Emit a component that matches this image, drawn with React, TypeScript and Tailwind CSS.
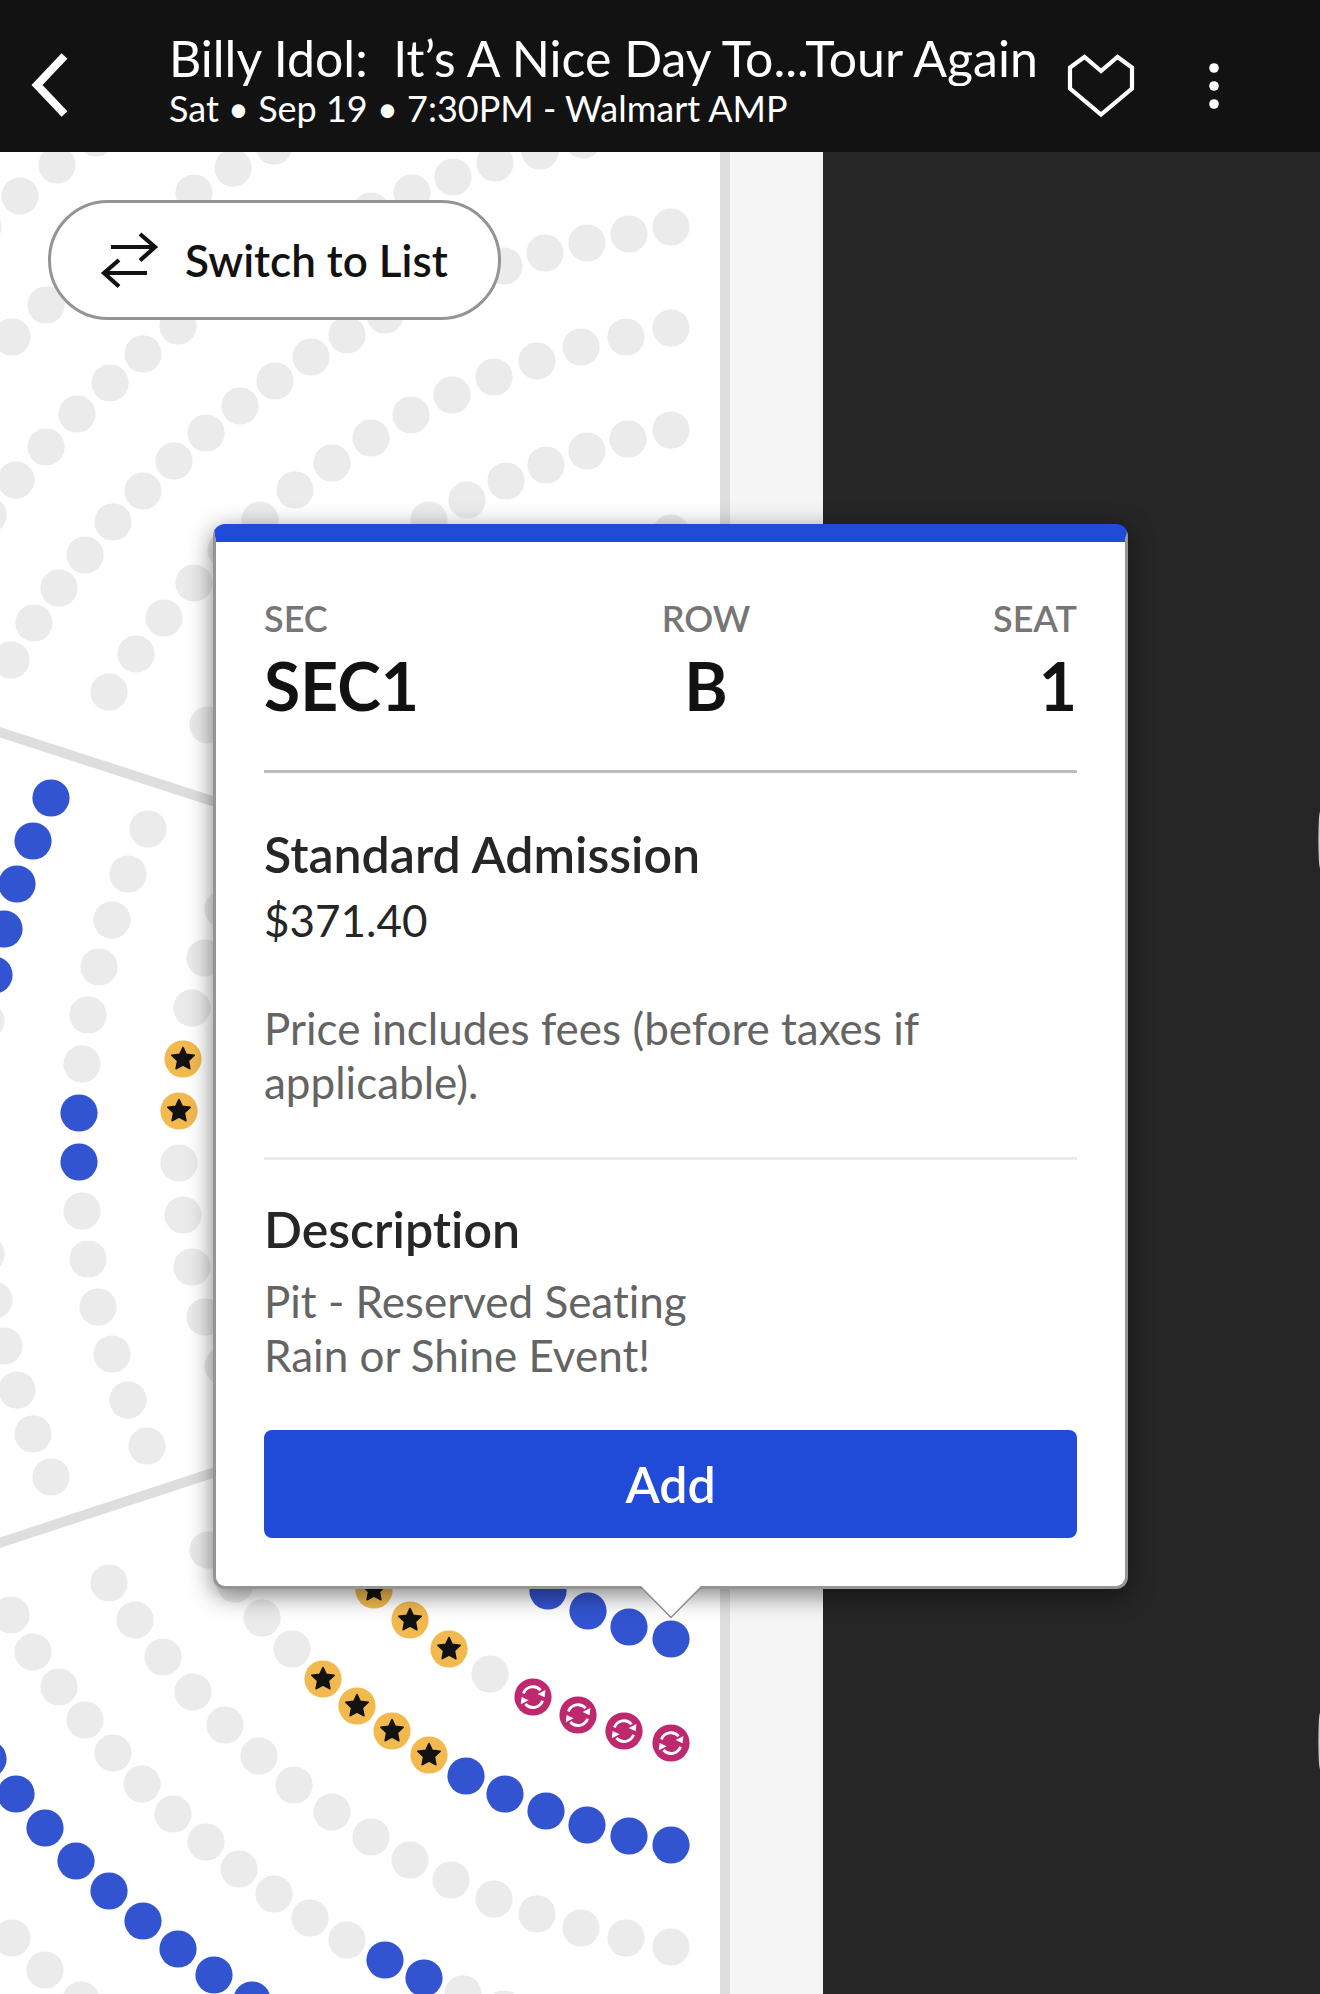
type SeatKind = "taken" | "open" | "premium" | "resale";

type SeatGroup = {
  kind: SeatKind;
  seats: [number, number][];
};

const seatGroups: SeatGroup[] = [
  // upper section
  { kind: "taken", seats: [[-17, 227], [20, 196], [57, 165], [96, 138]] },
  { kind: "taken", seats: [[12, 337], [46, 305], [194, 193], [233, 168], [274, 146]] },
  {
    kind: "taken",
    seats: [
      [-12, 515], [16, 480], [46, 447], [77, 414], [110, 383], [143, 354], [178, 326],
      [371, 211], [412, 193], [453, 177], [495, 163], [540, 151], [583, 140],
    ],
  },
  {
    kind: "taken",
    seats: [
      [11, 660], [34, 623], [59, 588], [85, 555], [113, 522], [143, 491], [174, 461],
      [206, 433], [240, 406], [275, 381], [311, 357], [347, 335], [385, 315],
      [504, 266], [545, 253], [587, 243], [629, 234], [671, 227],
    ],
  },
  {
    kind: "taken",
    seats: [
      [109, 692], [136, 654], [164, 618], [194, 583], [226, 550], [260, 520], [295, 490],
      [332, 463], [371, 438], [411, 415], [452, 395], [494, 377], [537, 361],
      [581, 347], [626, 337], [671, 328],
    ],
  },
  {
    kind: "taken",
    seats: [
      [208, 725], [429, 520], [467, 500], [506, 481], [546, 465], [587, 451],
      [628, 439], [671, 430], [671, 533],
    ],
  },
  // middle section
  { kind: "open", seats: [[51, 798], [33, 841], [17, 884], [4, 929], [-6, 975]] },
  {
    kind: "taken",
    seats: [
      [-14, 1021], [-14, 1254], [-6, 1300], [4, 1346], [17, 1390], [33, 1434], [51, 1477],
    ],
  },
  {
    kind: "taken",
    seats: [
      [148, 829], [128, 874], [112, 920], [99, 967], [88, 1015], [82, 1064],
      [82, 1211], [88, 1259], [98, 1307], [112, 1354], [128, 1400], [147, 1446],
    ],
  },
  { kind: "open", seats: [[79, 1113], [79, 1162]] },
  {
    kind: "taken",
    seats: [
      [223, 909], [205, 958], [192, 1008], [179, 1163], [183, 1215], [192, 1267],
      [205, 1317], [223, 1366],
    ],
  },
  { kind: "premium", seats: [[183, 1059], [179, 1111]] },
  // lower section
  { kind: "premium", seats: [[374, 1590], [410, 1620], [449, 1649]] },
  { kind: "taken", seats: [[490, 1674]] },
  { kind: "resale", seats: [[533, 1697], [578, 1715], [624, 1731], [671, 1743]] },
  { kind: "open", seats: [[548, 1591], [588, 1611], [629, 1627], [671, 1639]] },
  { kind: "taken", seats: [[208, 1550], [235, 1584], [262, 1618], [292, 1649]] },
  { kind: "premium", seats: [[323, 1679], [357, 1706], [392, 1731], [429, 1755]] },
  {
    kind: "open",
    seats: [[466, 1776], [505, 1794], [546, 1811], [587, 1825], [629, 1836], [671, 1845]],
  },
  {
    kind: "taken",
    seats: [
      [109, 1583], [135, 1620], [163, 1657], [193, 1692], [225, 1725], [259, 1756],
      [294, 1785], [332, 1812], [371, 1837], [410, 1860], [451, 1880], [494, 1899],
      [537, 1914], [581, 1928], [626, 1938], [671, 1947],
    ],
  },
  {
    kind: "taken",
    seats: [
      [11, 1615], [33, 1652], [59, 1687], [85, 1720], [113, 1753], [142, 1784],
      [173, 1814], [206, 1842], [239, 1869], [274, 1894], [310, 1918], [347, 1940],
      [463, 1994], [504, 2009],
    ],
  },
  { kind: "open", seats: [[385, 1960], [424, 1978]] },
  {
    kind: "open",
    seats: [
      [-12, 1759], [16, 1794], [45, 1828], [76, 1861], [109, 1891], [143, 1921],
      [178, 1949], [214, 1975], [252, 2000],
    ],
  },
  { kind: "taken", seats: [[12, 1938], [45, 1970], [81, 2000]] },
];

const seatFill: Record<SeatKind, string> = {
  taken: "fill-[#ebebeb]",
  open: "fill-[#3354d1]",
  premium: "fill-[#f2b94f]",
  resale: "fill-[#bd286f]",
};

const Seat = ({ kind, x, y }: { kind: SeatKind; x: number; y: number }) => (
  <g transform={`translate(${x} ${y})`}>
    <circle r="18.6" className={seatFill[kind]} />
    {kind === "premium" && (
      <path
        d="M0-11.6 3.3-4.7 11.3-3.7 5.5 1.8 7 9.8 0 6.2-7 9.8-5.5 1.8-11.3-3.7-3.3-4.7Z"
        className="fill-[#121212] stroke-[#121212]"
        strokeWidth="1.4"
        strokeLinejoin="round"
      />
    )}
    {kind === "resale" && (
      <g className="fill-white">
        <path
          d="M-9.6-3.6A10.2 10.2 0 0 1 7.6-6.8M9.6 3.8A10.2 10.2 0 0 1-7.6 7"
          className="fill-none stroke-white"
          strokeWidth="2.8"
        />
        <path d="M12.4-7 11.6.2 4.6-3Z" />
        <path d="M-12.2 7.2-11.4 0-4.4 3.2Z" />
      </g>
    )}
  </g>
);

const SeatMap = () => (
  <svg
    viewBox="0 152 1320 1842"
    preserveAspectRatio="xMinYMin slice"
    className="absolute inset-0 w-full h-full"
    aria-hidden="true"
  >
    <rect x="0" y="152" width="823" height="1842" className="fill-white" />
    <rect x="730" y="152" width="93" height="1842" className="fill-[#f5f5f5]" />
    <rect x="720" y="152" width="10" height="1842" className="fill-[#dedede]" />
    <path
      d="M-4 731 240 810M-4 1544 240 1464"
      className="fill-none stroke-[#dedede]"
      strokeWidth="10"
    />
    {seatGroups.map((group, i) =>
      group.seats.map(([x, y]) => (
        <Seat key={`${i}-${x}-${y}`} kind={group.kind} x={x} y={y} />
      ))
    )}
    <ellipse cx="1320" cy="840" rx="1.6" ry="28" className="fill-[#cccccc]" />
    <ellipse cx="1320" cy="1741" rx="1.6" ry="28" className="fill-[#cccccc]" />
  </svg>
);

const Header = () => (
  <header className="flex items-center h-[152px] bg-[#121212] text-white">
    <button type="button" aria-label="Back" className="shrink-0 w-[169px] pl-7 pt-[18px]">
      <svg width="44" height="68" viewBox="0 0 44 68" fill="none" stroke="currentColor" strokeWidth="8">
        <path d="M36.5 5 9 34 36.5 63" />
      </svg>
    </button>
    <div className="flex-1 min-w-0 pt-2">
      <h1 className="overflow-hidden whitespace-pre text-[50px] leading-[56px]">
        Billy Idol:  It’s A Nice Day To...Tour Again
      </h1>
      <p className="truncate text-[36px] leading-[44px]">
        Sat • Sep 19 • 7:30PM - Walmart AMP
      </p>
    </div>
    <button type="button" aria-label="Favorite" className="shrink-0 pl-7 pt-5">
      <svg width="70" height="68" viewBox="0 0 70 68" fill="none" stroke="currentColor" strokeWidth="4.2">
        <path d="M35 19 18.5 5 4 15.5V36.5L35 62.5 66 36.5V15.5L51.5 5Z" />
      </svg>
    </button>
    <button type="button" aria-label="More options" className="shrink-0 w-[184px] pl-[71px] pt-5">
      <svg width="14" height="50" viewBox="0 0 14 50" fill="currentColor">
        <circle cx="7" cy="7" r="4.8" />
        <circle cx="7" cy="25" r="4.8" />
        <circle cx="7" cy="43" r="4.8" />
      </svg>
    </button>
  </header>
);

const seatInfo = [
  { label: "SEC", value: "SEC1", align: "text-left" },
  { label: "ROW", value: "B", align: "text-center" },
  { label: "SEAT", value: "1", align: "text-right" },
];

const SeatCard = () => (
  <section className="relative w-full max-w-[915px] bg-white border-3 border-t-18 border-[#949494] border-t-[#1f4bd8] rounded-xl px-12 pb-12 shadow-[0_6px_24px_rgba(0,0,0,0.5)]">
    <dl className="flex justify-between pt-[54px] pb-12 border-b-3 border-[#bdbdbd]">
      {seatInfo.map(({ label, value, align }) => (
        <div key={label} className={align}>
          <dt className="text-[36px] leading-[44px] font-semibold text-[#767676]">{label}</dt>
          <dd className="mt-[10px] text-[66px] leading-[72px] font-bold text-[#121212]">{value}</dd>
        </div>
      ))}
    </dl>
    <div className="pt-[54px] pb-12 border-b-3 border-[#ebebeb]">
      <h2 className="text-[50px] leading-[54px] font-semibold text-[#262626]">Standard Admission</h2>
      <p className="mt-3 text-[44px] leading-[54px] text-[#262626]">$371.40</p>
      <p className="mt-[54px] text-[44px] leading-[54px] text-[#646464]">
        Price includes fees (before taxes if applicable).
      </p>
    </div>
    <h2 className="mt-[42px] text-[50px] leading-[54px] font-semibold text-[#262626]">Description</h2>
    <p className="mt-[18px] text-[44px] leading-[54px] text-[#646464]">
      Pit - Reserved Seating
      <br />
      Rain or Shine Event!
    </p>
    <button
      type="button"
      className="mt-12 w-full h-[108px] rounded-lg bg-[#1f4bd8] text-white text-[50px] leading-[54px] font-semibold"
    >
      Add
    </button>
    <svg
      width="64"
      height="34"
      viewBox="0 0 64 34"
      className="absolute left-1/2 top-full -translate-x-1/2"
      aria-hidden="true"
    >
      <path d="M1 0 32 31.5 63 0Z" className="fill-white" />
      <path d="M1 0 32 31.5 63 0" className="fill-none stroke-[#8c8c8c]" strokeWidth="1.5" />
    </svg>
  </section>
);

const App = () => {
  return (
    <div className="flex flex-col min-h-screen bg-[#262626] font-[Lato,'Open_Sans',sans-serif] [font-variant-ligatures:none]">
      <Header />
      <main className="relative flex-1 overflow-hidden bg-[#262626] pt-12 pl-12 pb-12">
        <SeatMap />
        <button
          type="button"
          className="relative flex items-center gap-[26px] h-[120px] pl-12 pr-[50px] rounded-full border-3 border-[#949494] bg-white text-[#121212] text-[44px] font-semibold"
        >
          <svg width="60" height="58" viewBox="0 0 60 58" fill="none" stroke="currentColor" strokeWidth="4.2">
            <path d="M12 16H55M41 3 56 16 41 29.5M48 42H5M20 29 5 42 20 55.5" />
          </svg>
          Switch to List
        </button>
        <div className="mt-[204px] ml-[165px]">
          <SeatCard />
        </div>
      </main>
    </div>
  );
};

export default App;
